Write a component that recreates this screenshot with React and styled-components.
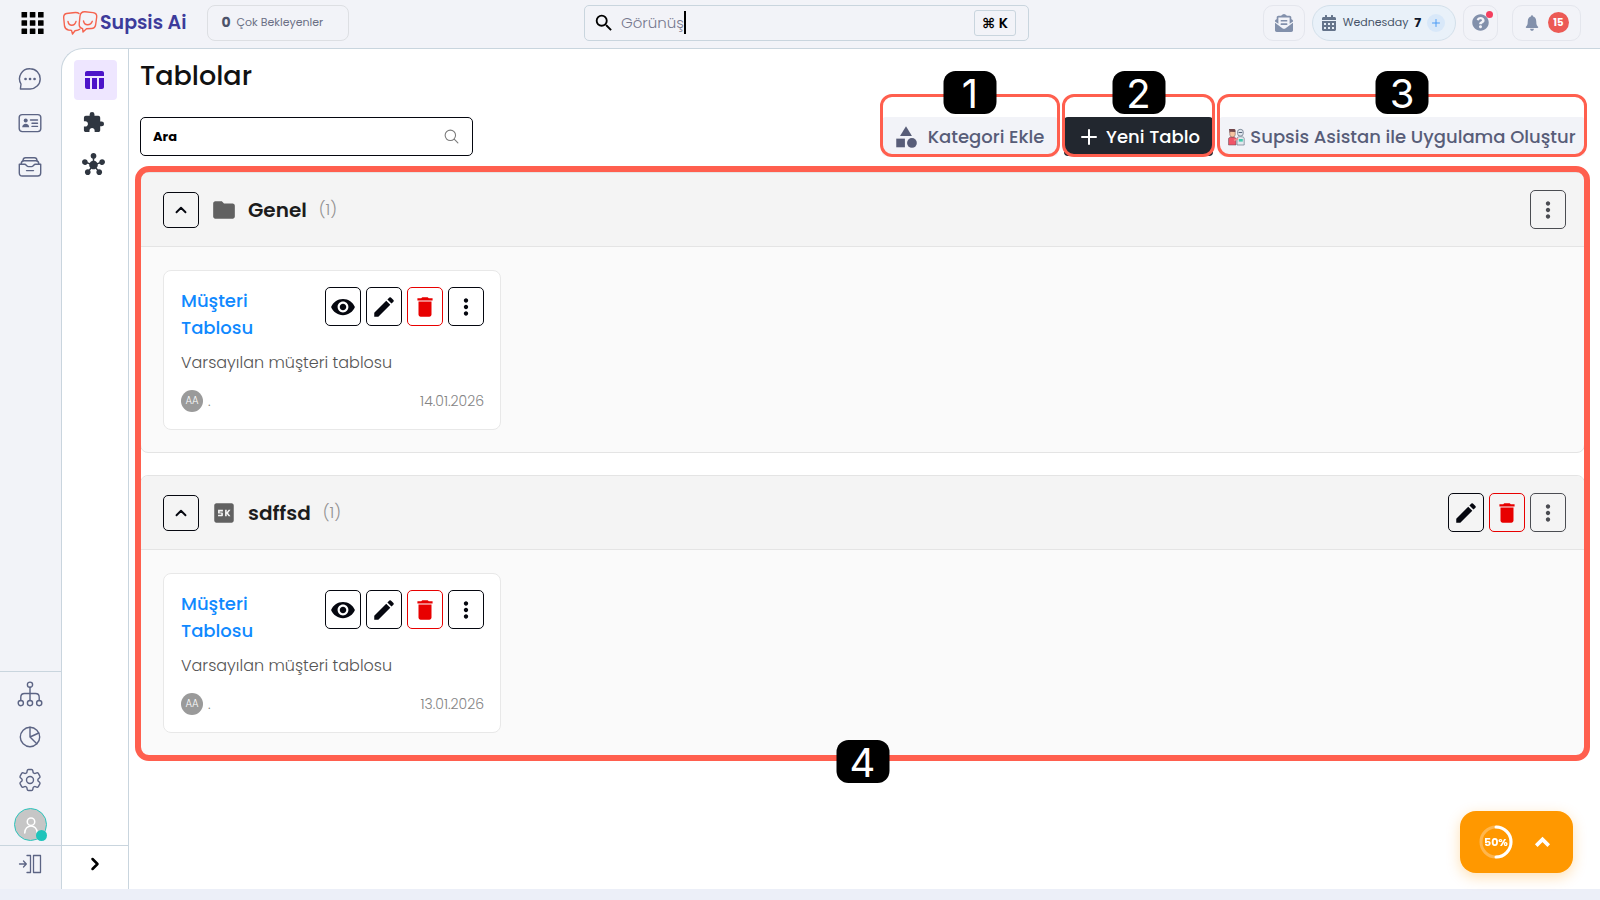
import React from 'react';
import styled, { createGlobalStyle, css } from 'styled-components';
import {
  Md5K,
  MdCategory,
  MdDelete,
  MdEdit,
  MdExtension,
  MdFolder,
  MdHub,
  MdMoreVert,
  MdRemoveRedEye,
  MdSearch,
  MdTableChart,
} from 'react-icons/md';
import { FaCalendarAlt, FaEnvelopeOpenText, FaQuestionCircle } from 'react-icons/fa';
import { HiOutlineCog6Tooth } from 'react-icons/hi2';
import { IoIosNotifications } from 'react-icons/io';
import { IoSearchOutline } from 'react-icons/io5';
import { ChevronRight, ChevronUp, Plus } from 'lucide-react';

const GlobalStyle = createGlobalStyle`
  * {
    box-sizing: border-box;
  }

  body {
    margin: 0;
    background: #eceff8;
    font-family: Poppins, Inter, 'Noto Sans', sans-serif;
    color: #1a1a1a;
  }

  button, input {
    font-family: inherit;
    margin: 0;
  }

  button {
    cursor: pointer;
  }
`;

const Page = styled.div`
  display: flex;
  flex-direction: column;
  min-height: 100vh;
  padding-bottom: 11px;
`;

/* header */

const Header = styled.header`
  display: grid;
  grid-template-columns: 1fr 457px 1fr;
  align-items: center;
  height: 48px;
  padding: 0 19px 3px 20px;
  background: #f2f3f8;
`;

const HeaderSide = styled.div`
  display: flex;
  align-items: center;
  justify-content: ${({ $end }) => ($end ? 'flex-end' : 'flex-start')};
  gap: ${({ $end }) => ($end ? '7px' : '18px')};
`;

const PlainButton = styled.button`
  display: flex;
  align-items: center;
  justify-content: center;
  padding: 0;
  border: 0;
  background: transparent;
  color: ${({ $color }) => $color || '#5c6484'};
`;

const Brand = styled.a`
  display: flex;
  align-items: center;
  gap: 2px;
  padding-right: 3px;
  color: #3d3b9b;
  font-size: 19px;
  font-weight: 600;
  line-height: 36px;
  white-space: nowrap;
  text-decoration: none;
`;

const WaitingButton = styled.button`
  display: flex;
  align-items: center;
  gap: 6px;
  width: 142px;
  height: 36px;
  padding: 0 13px;
  border: 1px solid #dddfe3;
  border-radius: 8px;
  background: transparent;
  color: #6a6f85;
  font-size: 11px;
  white-space: nowrap;

  b {
    color: #4d536b;
    font-size: 14px;
  }
`;

const GlobalSearch = styled.label`
  display: flex;
  align-items: center;
  height: 36px;
  margin-left: 12px;
  padding: 0 12px 0 8px;
  border: 1px solid #c9d5de;
  border-radius: 5px;
  color: #000;

  input {
    field-sizing: content;
    margin-left: 6px;
    padding: 0;
    border: 0;
    outline: 0;
    background: transparent;
    color: #77798f;
    font-size: 15px;
    font-weight: 300;
  }

  kbd {
    margin-left: auto;
    padding: 0 7px;
    border: 1px solid #c9d5de;
    border-radius: 3px;
    font-family: Poppins, Inter, 'DejaVu Sans', sans-serif;
    font-size: 14px;
    font-weight: 600;
    line-height: 24px;
  }
`;

const Caret = styled.i`
  width: 2px;
  height: 23px;
  background: #000;
`;

const HeaderChip = styled.button`
  position: relative;
  display: flex;
  align-items: center;
  justify-content: center;
  gap: 6px;
  width: ${({ $width }) => $width};
  height: 36px;
  padding: 0;
  border: 1px solid #e4e6ed;
  border-radius: 10px;
  background: #f2f3f8;
  color: #8290ab;
`;

const BellChip = styled(HeaderChip)`
  margin-left: 7px;
  padding-right: 2px;
`;

const DateChip = styled(HeaderChip)`
  padding-right: 2px;
  border-color: #d3e0ea;
  border-radius: 18px;
  background: #e9f1f9;
  color: #64748b;
  font-size: 11px;

  span {
    color: #475569;
  }

  b {
    color: #0f172a;
    font-size: 13px;
  }
`;

const AddDot = styled.i`
  display: flex;
  align-items: center;
  justify-content: center;
  width: 18px;
  height: 18px;
  border-radius: 50%;
  background: #d8e8f9;
  color: #4a9bf5;
`;

const AlertDot = styled.i`
  position: absolute;
  top: 5px;
  right: 4px;
  width: 7px;
  height: 7px;
  border-radius: 50%;
  background: #f43f5e;
`;

const CountBadge = styled.span`
  width: 21px;
  height: 21px;
  border-radius: 50%;
  background: #ec5a55;
  color: #fff;
  font-size: 10px;
  font-weight: 700;
  line-height: 21px;
`;

/* side rails */

const Body = styled.div`
  display: flex;
  flex: 1;
  background: #f2f3f8;
`;

const Rail = styled.nav`
  display: flex;
  flex-direction: column;
  flex: 0 0 61px;
  padding-top: 16px;
`;

const RailGroup = styled.div`
  display: flex;
  flex-direction: column;
  align-items: center;
  gap: ${({ $gap }) => $gap || '14px'};
`;

const RailBottom = styled(RailGroup)`
  margin-top: auto;
  padding: 7px 0 4px;
  border-top: 1px solid #c9d5de;
`;

const RailItem = styled(PlainButton)`
  width: 43px;
  height: 30px;
  padding-right: 2px;
`;

const RailFooter = styled.div`
  display: flex;
  align-items: center;
  justify-content: center;
  height: 44px;
  padding-bottom: 8px;
  border-top: 1px solid #c9d5de;
`;

const Avatar = styled.button`
  position: relative;
  display: flex;
  align-items: center;
  justify-content: center;
  width: 33px;
  height: 33px;
  padding: 0;
  border: 1px solid #2cc5bd;
  border-radius: 50%;
  background: #c6c6c6;
  color: #fff;

  &::after {
    content: '';
    position: absolute;
    right: -1px;
    bottom: -1px;
    width: 11px;
    height: 11px;
    border-radius: 50%;
    background: #1fc4bb;
  }
`;

const Panel = styled.div`
  display: flex;
  flex: 1;
  min-width: 0;
  border: solid #c9d5de;
  border-width: 1px 0 0 1px;
  border-top-left-radius: 22px;
  background: #fff;
`;

const SubRail = styled.nav`
  display: flex;
  flex-direction: column;
  justify-content: space-between;
  flex: 0 0 67px;
  padding-top: 11px;
  border-right: 1px solid #c9d5de;
`;

const SubItem = styled(PlainButton)`
  width: 43px;
  height: 40px;
  padding-right: 3px;
  border-radius: 4px;
  background: ${({ $active }) => ($active ? '#eee6ff' : 'transparent')};
  color: ${({ $active }) => ($active ? '#4c14c9' : '#2f3640')};
`;

/* content */

const Main = styled.main`
  flex: 1;
  min-width: 0;
  padding: 8px 15px 40px 11px;
`;

const Title = styled.h1`
  margin: 0;
  color: #111;
  font-size: 27px;
  font-weight: 500;
  line-height: 38px;
`;

const Toolbar = styled.div`
  display: flex;
  align-items: center;
  justify-content: space-between;
  margin-top: 22px;
`;

const TableSearch = styled.label`
  display: flex;
  align-items: center;
  width: 333px;
  height: 39px;
  padding: 0 12px;
  border: 1px solid #05070f;
  border-radius: 5px;
  color: #7a7a7a;

  input {
    flex: 1;
    min-width: 0;
    padding: 0;
    border: 0;
    outline: 0;
    background: transparent;
    color: #000;
    font-size: 13px;
    font-weight: 700;
  }

  input::placeholder {
    color: #000;
  }
`;

const Actions = styled.div`
  display: flex;
  gap: 6px;
`;

const ActionButton = styled.button`
  position: relative;
  display: flex;
  align-items: center;
  justify-content: center;
  gap: ${({ $gap }) => $gap || '5px'};
  width: ${({ $width }) => $width};
  height: 39px;
  padding: 0;
  border: 0;
  border-radius: 4px;
  background: ${({ $dark }) => ($dark ? '#22272f' : '#f2f3f8')};
  color: ${({ $dark }) => ($dark ? '#fff' : '#585d78')};
  font-size: 18px;
  font-weight: 500;
  white-space: nowrap;
`;

const CategoryButton = styled(ActionButton)`
  padding-right: 3px;
`;

const callout = css`
  position: absolute;
  border: solid #ff5f4e;
  pointer-events: none;
`;

const ActionCallout = styled.span`
  ${callout}
  inset: -23px -2px -1px;
  border-width: 3px;
  border-radius: 12px;
`;

const TablesCallout = styled.div`
  ${callout}
  inset: -6px -5px -5px;
  border-width: 6px;
  border-radius: 14px;
`;

const CalloutNumber = styled.span`
  position: absolute;
  left: 50%;
  ${({ $bottom }) => ($bottom ? 'bottom: -28px;' : 'top: -26px;')}
  width: 53px;
  height: 43px;
  border-radius: 12px;
  background: #000;
  color: #fff;
  font-family: Inter, sans-serif;
  font-size: 40px;
  font-weight: 400;
  line-height: 45px;
  text-align: center;
  transform: translateX(-50%);
`;

const Sections = styled.div`
  position: relative;
  display: flex;
  flex-direction: column;
  gap: 22px;
  margin-top: 16px;
`;

const Section = styled.section`
  overflow: hidden;
  border: 1px solid #e4e4e4;
  border-radius: 8px;
  background: #fafafa;
`;

const SectionHeader = styled.div`
  display: flex;
  align-items: center;
  height: 74px;
  padding: 0 18px 0 22px;
  border-bottom: 1px solid #e4e4e4;
  background: #f4f4f4;
  color: #616161;

  h2 {
    margin: 0 12px 0 11px;
    color: #1c1c1c;
    font-size: 20px;
    font-weight: 600;
    line-height: 30px;
  }
`;

const SectionCount = styled.span`
  flex: 1;
  color: #929292;
  font-size: 16px;
  font-weight: 300;
`;

const SectionBody = styled.div`
  padding: 23px 22px 22px;
`;

const ButtonRow = styled.div`
  display: flex;
  gap: 5px;
`;

const IconButton = styled.button`
  display: flex;
  align-items: center;
  justify-content: center;
  width: 36px;
  height: ${({ $square }) => ($square ? '36px' : '39px')};
  padding: 0;
  border: 1px solid currentColor;
  border-radius: 5px;
  background: ${({ $clear }) => ($clear ? 'transparent' : '#fff')};
  color: ${({ $danger }) => ($danger ? '#e80000' : '#05070f')};
  opacity: ${({ $muted }) => ($muted ? 0.7 : 1)};
`;

const ToggleButton = styled(IconButton)`
  margin-right: 12px;
`;

const Card = styled.article`
  width: 338px;
  padding: 16px 16px 17px 17px;
  border: 1px solid #e8e8e8;
  border-radius: 8px;
  background: #fff;
`;

const CardTop = styled.div`
  display: flex;
  justify-content: space-between;

  h3 {
    width: 100px;
    margin: 0;
    color: #1089ff;
    font-size: 18px;
    font-weight: 500;
    line-height: 27px;
  }
`;

const CardText = styled.p`
  margin: 9px 0 0;
  color: #555;
  font-size: 16px;
  font-weight: 300;
  line-height: 26px;
`;

const CardFooter = styled.div`
  display: flex;
  align-items: center;
  gap: 5px;
  margin-top: 14px;
  color: #848484;
  font-size: 14px;
  font-weight: 300;
  line-height: 22px;

  time {
    margin-left: auto;
  }
`;

const Owner = styled.span`
  width: 22px;
  height: 22px;
  border-radius: 50%;
  background: #9a9a9a;
  color: #fff;
  font-size: 10px;
  text-align: center;
`;

const ProgressButton = styled.button`
  position: fixed;
  right: 27px;
  bottom: 27px;
  display: flex;
  align-items: center;
  justify-content: space-between;
  width: 113px;
  height: 62px;
  padding: 0 18px;
  border: 0;
  border-radius: 16px;
  background: #ff9800;
  box-shadow: 0 4px 14px rgba(255, 152, 0, 0.3);
  color: #fff;
`;

/* drawings */

const Line = ({ size = 24, width = 1.4, children }) => (
  <svg
    width={size}
    height={size}
    viewBox="0 0 24 24"
    fill="none"
    stroke="currentColor"
    strokeWidth={width}
    strokeLinecap="round"
    strokeLinejoin="round"
    aria-hidden="true"
  >
    {children}
  </svg>
);

const GridIcon = () => (
  <svg width="24" height="24" viewBox="0 0 24 24" fill="#000" aria-hidden="true">
    {[1, 9.2, 17.4].map((y) =>
      [1.5, 9.8, 18].map((x) => <rect key={`${x}-${y}`} x={x} y={y} width="5.6" height="5.6" rx="0.5" />)
    )}
  </svg>
);

const LogoMark = () => (
  <svg width="36" height="28" viewBox="0 0 36 28" fill="none" stroke="#f5634f" strokeWidth="1.4" strokeLinecap="round" strokeLinejoin="round" aria-hidden="true">
    <path d="M17 4.5 C16 3.4 14 3.3 11 3.7 L4.5 4.5 C2 5 1.5 6.5 1.7 9 L2.5 17 C3 19.5 4 20.6 6.5 21 L9.5 21.4 L10.5 25 L13 21.8 C15 21.6 16.5 21.4 17.7 20.3" />
    <path d="M6 12.5 C7 17.5 12.5 17.5 14 12.5" />
    <path d="M23 2.8 L31 3.6 C34 4 35 5.5 34.7 8 L33.6 16 C33 18.7 31.8 19.5 29.5 19.5 L24.5 19.8 L21 23 L20.6 19.6 C18 19 17 17.5 17.2 15 L18 7 C18.4 4 20 2.6 23 2.8 Z" />
    <path d="M21.5 12 C22.5 17 28.5 17 30.3 12.3" />
  </svg>
);

const ChatIcon = () => (
  <Line>
    <path d="M12.2 1.8 A10 10 0 1 1 12 22 H2.4 L3 17 A10 10 0 0 1 12.2 1.8 Z" />
    <path d="M7.5 12 H7.6 M12 12 H12.1 M16.5 12 H16.6" strokeWidth="2.6" />
  </Line>
);

const ContactIcon = () => (
  <Line>
    <rect x="1.2" y="3.6" width="21.6" height="17" rx="3" />
    <circle cx="7.7" cy="9.6" r="2" fill="currentColor" stroke="none" />
    <path d="M4.2 16.2 C4.2 11.5 11.2 11.5 11.2 16.2 Z" fill="currentColor" stroke="none" />
    <path d="M12.5 9 H19.5 M14 12.2 H19.5 M14 15.4 H19.5" />
  </Line>
);

const InboxIcon = () => (
  <Line>
    <path d="M5 5.5 C5.2 3.5 6 2.8 7.5 2.8 H16.5 C18 2.8 18.8 3.5 19 5.5" />
    <path d="M3.2 9 C3.2 6.7 4.3 5.7 6 5.7 H18 C19.7 5.7 20.8 6.7 20.8 9" />
    <path d="M1.3 9.3 H6.5 C8.5 9.3 8.5 11.6 10.5 11.6 H13.5 C15.5 11.6 15.5 9.3 17.5 9.3 H22.7 V18 C22.7 20 21.7 21 19.7 21 H4.3 C2.3 21 1.3 20 1.3 18 Z" />
    <path d="M8.5 15.6 H15.5" />
  </Line>
);

const TreeIcon = () => (
  <Line size={26} width={1.3}>
    <circle cx="12" cy="3.4" r="2.4" />
    <circle cx="3.5" cy="20.4" r="2.4" />
    <circle cx="12" cy="20.4" r="2.4" />
    <circle cx="20.5" cy="20.4" r="2.4" />
    <path d="M12 5.8 V18 M3.5 18 V15 C3.5 12.6 4.5 11.6 7 11.6 H17 C19.5 11.6 20.5 12.6 20.5 15 V18" />
  </Line>
);

const PieIcon = () => (
  <Line>
    <circle cx="12" cy="12" r="9.7" />
    <path d="M12 2.3 V12 L18.8 18.8 M12 12 L20.8 8" />
  </Line>
);

const CollapseIcon = () => (
  <Line width={1.3}>
    <path d="M1.5 12 H8 M5.5 9 L8.3 12 L5.5 15 M9 3.5 H12.5 V20.5 H9" />
    <rect x="15.5" y="3.5" width="7" height="17" />
  </Line>
);

const PersonIcon = () => (
  <Line size={20} width={1.8}>
    <circle cx="12" cy="8" r="4.5" />
    <path d="M4.5 21.5 C4.5 10.5 19.5 10.5 19.5 21.5" />
  </Line>
);

const AssistantIcon = () => (
  <svg width="17" height="18" viewBox="0 0 17 18" aria-hidden="true">
    <path d="M0.5 17 V11 C0.5 9.5 2 9 4 9 C6.5 9 8 9.5 8 11 V17 Z" fill="#ef5568" stroke="#5a4a55" strokeWidth="0.5" />
    <rect x="1.8" y="2" width="5.4" height="7" rx="2.4" fill="#f6c3a0" stroke="#6b4a45" strokeWidth="0.5" />
    <path d="M1 1 H6.5 C7.5 1.4 7.8 2.4 7.4 4 L2.2 3.8 L1.6 5 Z" fill="#71454a" />
    <rect x="9.6" y="1.4" width="5.6" height="6.6" rx="2.4" fill="#dfe6ee" stroke="#56657a" strokeWidth="0.7" />
    <path d="M10.6 4.5 H14.2" stroke="#56657a" strokeWidth="1" />
    <path d="M9 17 V10.5 C9 9 10.5 8.7 12.5 8.7 C15 8.7 16.2 9.2 16.2 10.5 V17 Z" fill="#e4e9ee" stroke="#56657a" strokeWidth="0.6" />
    <rect x="10.8" y="11" width="4" height="2.6" fill="#43c9ae" />
    <path d="M6 12.5 L10 10.5" stroke="#ef8b8b" strokeWidth="1.6" />
  </svg>
);

const ProgressRing = () => (
  <svg width="36" height="36" viewBox="0 0 36 36" aria-hidden="true">
    <circle cx="18" cy="18" r="15" fill="none" stroke="#ffb64d" strokeWidth="3" />
    <path d="M18 3 A15 15 0 0 1 18 33" fill="none" stroke="#fff" strokeWidth="3" strokeLinecap="round" />
    <text x="18" y="22" fill="#fff" fontSize="11" fontWeight="700" textAnchor="middle">50%</text>
  </svg>
);

/* page */

const sections = [
  { name: 'Genel', icon: MdFolder, date: '14.01.2026', editable: false },
  { name: 'sdffsd', icon: Md5K, date: '13.01.2026', editable: true },
];

const TableCard = ({ date }) => (
  <Card>
    <CardTop>
      <h3>Müşteri Tablosu</h3>
      <ButtonRow>
        <IconButton aria-label="Görüntüle"><MdRemoveRedEye size={26} /></IconButton>
        <IconButton aria-label="Düzenle"><MdEdit size={26} /></IconButton>
        <IconButton aria-label="Sil" $danger><MdDelete size={26} /></IconButton>
        <IconButton aria-label="Diğer"><MdMoreVert size={26} /></IconButton>
      </ButtonRow>
    </CardTop>
    <CardText>Varsayılan müşteri tablosu</CardText>
    <CardFooter>
      <Owner>AA</Owner>
      <span>.</span>
      <time>{date}</time>
    </CardFooter>
  </Card>
);

const TableSection = ({ name, icon: Icon, date, editable }) => (
  <Section>
    <SectionHeader>
      <ToggleButton aria-label="Daralt" $square $clear><ChevronUp size={18} strokeWidth={2.5} /></ToggleButton>
      <Icon size={26} />
      <h2>{name}</h2>
      <SectionCount>(1)</SectionCount>
      <ButtonRow>
        {editable && (
          <>
            <IconButton aria-label="Düzenle" $clear><MdEdit size={26} /></IconButton>
            <IconButton aria-label="Sil" $clear $danger><MdDelete size={26} /></IconButton>
          </>
        )}
        <IconButton aria-label="Diğer" $clear $muted><MdMoreVert size={26} /></IconButton>
      </ButtonRow>
    </SectionHeader>
    <SectionBody>
      <TableCard date={date} />
    </SectionBody>
  </Section>
);

const App = () => (
  <>
    <GlobalStyle />
    <Page>
      <Header>
        <HeaderSide>
          <PlainButton aria-label="Uygulamalar"><GridIcon /></PlainButton>
          <Brand href="#"><LogoMark />Supsis Ai</Brand>
          <WaitingButton><b>0</b>Çok Bekleyenler</WaitingButton>
        </HeaderSide>
        <GlobalSearch>
          <MdSearch size={22} />
          <input type="text" aria-label="Genel arama" defaultValue="Görünüş" />
          <Caret />
          <kbd>⌘ K</kbd>
        </GlobalSearch>
        <HeaderSide $end>
          <HeaderChip aria-label="Mesajlar" $width="42px"><FaEnvelopeOpenText size={18} /></HeaderChip>
          <DateChip $width="144px">
            <FaCalendarAlt size={16} />
            <span>Wednesday</span>
            <b>7</b>
            <AddDot><Plus size={12} /></AddDot>
          </DateChip>
          <HeaderChip aria-label="Yardım" $width="35px">
            <FaQuestionCircle size={17} />
            <AlertDot />
          </HeaderChip>
          <BellChip aria-label="Bildirimler" $width="69px">
            <IoIosNotifications size={20} />
            <CountBadge>15</CountBadge>
          </BellChip>
        </HeaderSide>
      </Header>

      <Body>
        <Rail>
          <RailGroup>
            <RailItem aria-label="Sohbetler"><ChatIcon /></RailItem>
            <RailItem aria-label="Kişiler"><ContactIcon /></RailItem>
            <RailItem aria-label="Arşiv"><InboxIcon /></RailItem>
          </RailGroup>
          <RailBottom $gap="13px">
            <RailItem aria-label="Organizasyon"><TreeIcon /></RailItem>
            <RailItem aria-label="Raporlar"><PieIcon /></RailItem>
            <RailItem aria-label="Ayarlar"><HiOutlineCog6Tooth size={28} strokeWidth={1.2} /></RailItem>
            <Avatar aria-label="Profil"><PersonIcon /></Avatar>
          </RailBottom>
          <RailFooter>
            <RailItem aria-label="Menüyü aç"><CollapseIcon /></RailItem>
          </RailFooter>
        </Rail>

        <Panel>
          <SubRail>
            <RailGroup $gap="2px">
              <SubItem aria-label="Tablolar" $active><MdTableChart size={24} /></SubItem>
              <SubItem aria-label="Eklentiler"><MdExtension size={23} /></SubItem>
              <SubItem aria-label="Bağlantılar"><MdHub size={23} /></SubItem>
            </RailGroup>
            <RailFooter>
              <PlainButton aria-label="Genişlet" $color="#000"><ChevronRight size={20} strokeWidth={3} /></PlainButton>
            </RailFooter>
          </SubRail>

          <Main>
            <Title>Tablolar</Title>
            <Toolbar>
              <TableSearch>
                <input type="text" aria-label="Tablo ara" placeholder="Ara" />
                <IoSearchOutline size={17} />
              </TableSearch>
              <Actions>
                <CategoryButton $width="176px" $gap="9px">
                  <MdCategory size={26} />
                  Kategori Ekle
                  <ActionCallout><CalloutNumber>1</CalloutNumber></ActionCallout>
                </CategoryButton>
                <ActionButton $width="149px" $dark>
                  <Plus size={24} strokeWidth={2} />
                  Yeni Tablo
                  <ActionCallout><CalloutNumber>2</CalloutNumber></ActionCallout>
                </ActionButton>
                <ActionButton $width="366px">
                  <AssistantIcon />
                  Supsis Asistan ile Uygulama Oluştur
                  <ActionCallout><CalloutNumber>3</CalloutNumber></ActionCallout>
                </ActionButton>
              </Actions>
            </Toolbar>
            <Sections>
              {sections.map((section) => (
                <TableSection key={section.name} {...section} />
              ))}
              <TablesCallout><CalloutNumber $bottom>4</CalloutNumber></TablesCallout>
            </Sections>
          </Main>
        </Panel>
      </Body>
    </Page>
    <ProgressButton aria-label="Kurulum ilerlemesi %50">
      <ProgressRing />
      <ChevronUp size={25} strokeWidth={3.5} strokeLinecap="butt" strokeLinejoin="miter" />
    </ProgressButton>
  </>
);

export default App;
